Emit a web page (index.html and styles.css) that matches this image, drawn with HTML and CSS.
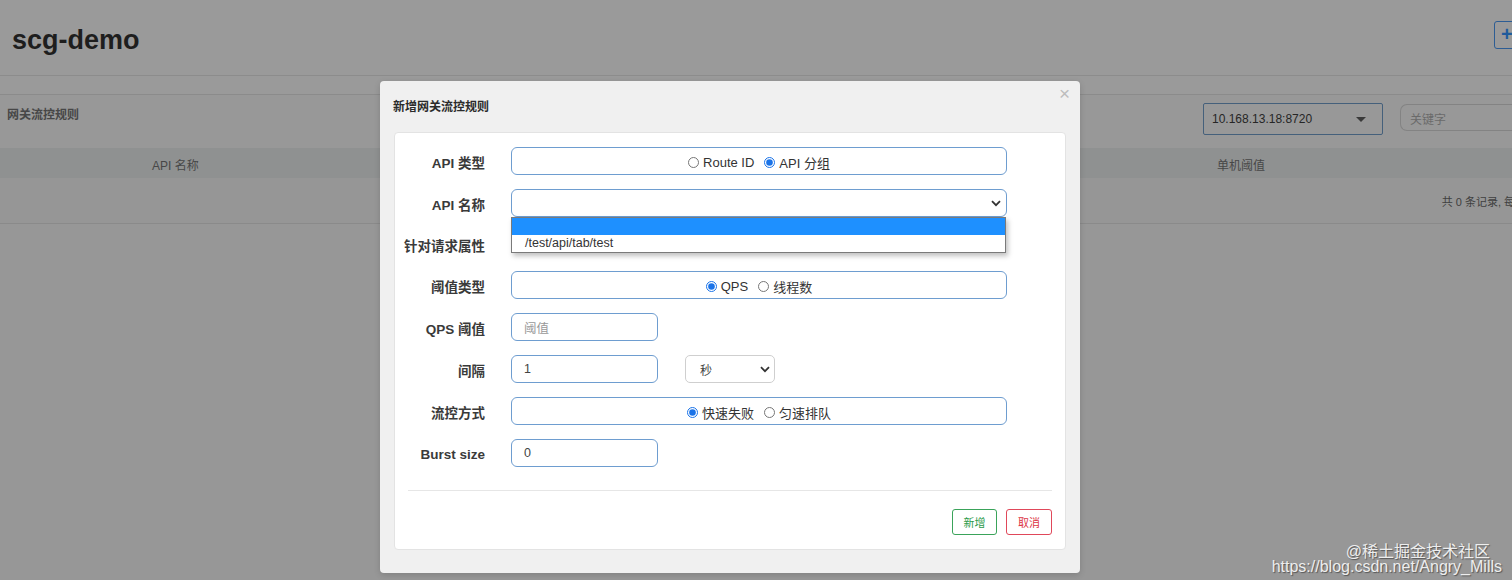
FILE: index.html
```html
<!DOCTYPE html>
<html lang="zh">
<head>
<meta charset="utf-8">
<title>scg-demo</title>
<link rel="stylesheet" href="styles.css">
</head>
<body>
<div class="page">
  <header class="top">
    <h1 class="app-title">scg-demo</h1>
    <span class="add-btn">+</span>
  </header>
  <div class="subbar"></div>
  <div class="toolbar">
    <span class="section-title">网关流控规则</span>
    <div class="tools">
      <div class="machine-select"><span>10.168.13.18:8720</span><span class="caret"></span></div>
      <div class="keyword">关键字</div>
    </div>
  </div>
  <div class="thead">
    <span class="th th-name">API 名称</span>
    <span class="th th-limit">单机阈值</span>
  </div>
  <div class="tfoot"><span class="count">共 0 条记录, 每</span></div>
</div>

<div class="modal">
  <div class="modal-head">
    <span class="modal-title">新增网关流控规则</span>
    <span class="modal-close">×</span>
  </div>
  <div class="modal-card">
    <div class="form">
      <div class="row">
        <label class="lbl">API 类型</label>
        <div class="box box-wide radios">
          <label class="radio"><input type="radio" name="t"> Route ID</label>
          <label class="radio"><input type="radio" name="t" checked> API 分组</label>
        </div>
      </div>
      <div class="row">
        <label class="lbl">API 名称</label>
        <div class="box box-wide select">
          <span></span>
          <svg class="chev" width="10" height="7" viewBox="0 0 10 7"><path d="M1 1.2 5 5.2 9 1.2" fill="none" stroke="#333" stroke-width="1.8"/></svg>
        </div>
        <div class="options">
          <div class="opt opt-active"></div>
          <div class="opt">/test/api/tab/test</div>
        </div>
      </div>
      <div class="row row-short">
        <label class="lbl">针对请求属性</label>
      </div>
      <div class="row">
        <label class="lbl">阈值类型</label>
        <div class="box box-wide radios">
          <label class="radio"><input type="radio" name="q" checked> QPS</label>
          <label class="radio"><input type="radio" name="q"> 线程数</label>
        </div>
      </div>
      <div class="row">
        <label class="lbl">QPS 阈值</label>
        <div class="box box-small placeholder">阈值</div>
      </div>
      <div class="row">
        <label class="lbl">间隔</label>
        <div class="box box-small">1</div>
        <div class="unit-select">
          <span>秒</span>
          <svg class="chev" width="10" height="7" viewBox="0 0 10 7"><path d="M1 1.2 5 5.2 9 1.2" fill="none" stroke="#333" stroke-width="1.8"/></svg>
        </div>
      </div>
      <div class="row">
        <label class="lbl">流控方式</label>
        <div class="box box-wide radios">
          <label class="radio"><input type="radio" name="m" checked> 快速失败</label>
          <label class="radio"><input type="radio" name="m"> 匀速排队</label>
        </div>
      </div>
      <div class="row">
        <label class="lbl">Burst size</label>
        <div class="box box-small">0</div>
      </div>
    </div>
    <div class="divider"></div>
    <div class="actions">
      <button class="btn btn-ok">新增</button>
      <button class="btn btn-cancel">取消</button>
    </div>
  </div>
</div>

<div class="watermark">
  <div class="wm1">@稀土掘金技术社区</div>
  <div class="wm2">https://blog.csdn.net/Angry_Mills</div>
</div>
</body>
</html>
```

FILE: styles.css
```css
* { box-sizing: border-box; }
html, body {
  margin: 0;
  padding: 0;
  width: 1512px;
  height: 580px;
  overflow: hidden;
  background: #979797;
  font-family: "Liberation Sans", Arial, "Noto Sans CJK SC", sans-serif;
  color: #333;
}

.page { position: relative; width: 1512px; }

.top {
  height: 76px;
  display: flex;
  align-items: center;
  justify-content: space-between;
  padding-left: 12px;
  padding-top: 5px;
  border-bottom: 1px solid #8c8c8c;
  background: #9a9a9a;
}
.app-title {
  margin: 0;
  font-size: 27px;
  font-weight: bold;
  color: #1e1e1e;
}
.add-btn {
  width: 30px;
  height: 28px;
  margin-right: -12px;
  margin-top: -10px;
  border: 1px solid #2d5d94;
  border-radius: 3px;
  color: #1f5b9c;
  font-weight: bold;
  font-size: 20px;
  line-height: 24px;
  padding-left: 6px;
  background: #9a9a9a;
}
.subbar {
  height: 19px;
  border-bottom: 1px solid #8b8b8b;
  background: #9a9a9a;
}
.toolbar {
  height: 53px;
  display: flex;
  justify-content: space-between;
  align-items: flex-start;
  padding-left: 7px;
  background: #989898;
}
.section-title {
  margin-top: 10px;
  font-size: 12px;
  color: #474747;
  font-weight: bold;
}
.tools { display: flex; gap: 17px; margin-top: 8px; margin-right: -30px; }
.machine-select {
  width: 180px;
  height: 32px;
  border: 1px solid #45607b;
  border-radius: 2px;
  display: flex;
  align-items: center;
  justify-content: space-between;
  padding: 0 16px 0 8px;
  font-size: 12px;
  color: #262626;
}
.caret {
  width: 0; height: 0;
  border-left: 5px solid transparent;
  border-right: 5px solid transparent;
  border-top: 5px solid #3a3a3a;
}
.keyword {
  width: 142px;
  height: 27px;
  margin-top: 1px;
  border: 1px solid #838383;
  border-right: none;
  border-radius: 7px 0 0 7px;
  font-size: 12px;
  color: #6a6a6a;
  padding: 5px 0 0 9px;
}
.thead {
  height: 30px;
  background: #8f9191;
  position: relative;
  font-size: 12px;
  color: #474747;
}
.th { position: absolute; top: 8px; }
.th-name { left: 152px; }
.th-limit { left: 1217px; }
.tfoot {
  height: 46px;
  border-bottom: 1px solid #8a8a8a;
  background: #969696;
  display: flex;
  justify-content: flex-end;
  align-items: center;
  font-size: 11px;
  color: #404040;
}
.count { margin-right: -3px; }

/* modal */
.modal {
  position: absolute;
  left: 380px;
  top: 81px;
  width: 700px;
  height: 492px;
  background: #f0f0f0;
  border-radius: 4px;
  box-shadow: 0 2px 6px rgba(0,0,0,0.15);
}
.modal-head {
  height: 51px;
  position: relative;
  padding: 16px 0 0 13px;
}
.modal-title {
  font-size: 12px;
  color: #2b2b2b;
  font-weight: bold;
}
.modal-close {
  position: absolute;
  right: 10px;
  top: 2px;
  font-size: 19px;
  color: #bdbdbd;
}
.modal-card {
  margin-left: 14px;
  width: 672px;
  height: 418px;
  background: #fff;
  border: 1px solid #e3e3e3;
  border-radius: 4px;
  padding-top: 14px;
}
.form { display: flex; flex-direction: column; gap: 14px; }
.row {
  position: relative;
  height: 28px;
  display: flex;
  align-items: center;
}
.row-short { height: 26px; }
.lbl {
  width: 90px;
  text-align: right;
  font-size: 13.5px;
  font-weight: bold;
  color: #3a3a3a;
  margin-right: 26px;
  white-space: nowrap;
  padding-top: 2px;
}
.box {
  height: 28px;
  border: 1px solid #6e9dd0;
  border-radius: 6px;
  font-size: 12.5px;
  color: #444;
  display: flex;
  align-items: center;
  padding-left: 12px;
}
.box-wide { width: 496px; }
.box-small { width: 147px; }
.placeholder { color: #999; }
.radios { justify-content: center; padding-left: 0; gap: 10px; color: #333; padding-top: 2px; }
.radio { display: flex; align-items: center; gap: 4px; font-size: 13px; }
.radio input { margin: 0; width: 11px; height: 11px; accent-color: #1a73e8; }
.select { justify-content: space-between; padding-right: 5px; }
.chev { display: block; }
.options {
  position: absolute;
  left: 116px;
  top: 28px;
  width: 495px;
  height: 36px;
  border: 1px solid #7a7a7a;
  background: #fff;
  box-shadow: 2px 3px 5px rgba(0,0,0,0.25);
  z-index: 2;
}
.opt {
  height: 17px;
  font-size: 12.5px;
  color: #333;
  padding-left: 13px;
  line-height: 17px;
}
.opt-active { background: #1e90ff; }
.unit-select {
  margin-left: 27px;
  width: 90px;
  height: 28px;
  border: 1px solid #cfcfcf;
  border-radius: 5px;
  display: flex;
  align-items: center;
  justify-content: space-between;
  padding: 0 4px 0 14px;
  font-size: 12px;
  color: #444;
}
.divider {
  margin: 23px 13px 0 13px;
  border-top: 1px solid #e6e6e6;
}
.actions {
  display: flex;
  justify-content: flex-end;
  gap: 9px;
  padding: 18px 13px 0 0;
}
.btn {
  height: 26px;
  padding: 0 10px;
  font-size: 11px;
  background: #fff;
  border-radius: 3px;
  font-family: inherit;
}
.btn-ok { width: 45px; border: 1px solid #3aa35a; color: #2a9a4a; }
.btn-cancel { width: 46px; border: 1px solid #e0485a; color: #dc3545; }

.watermark {
  position: absolute;
  right: 10px;
  bottom: 6px;
  text-align: right;
  color: #eeeeee;
  text-shadow: 1px 1px 1px #555;
  font-size: 16px;
  line-height: 15px;
}
.wm1 { margin-right: 12px; font-size: 16px; }
.wm2 { margin-top: 0; }
```
